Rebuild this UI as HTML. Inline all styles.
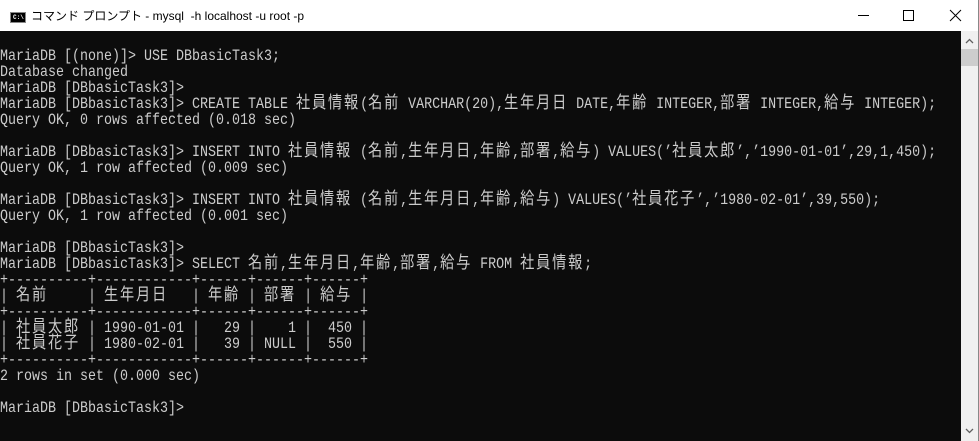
<!DOCTYPE html>
<html><head><meta charset="utf-8"><style>
html,body{margin:0;padding:0;width:979px;height:441px;overflow:hidden;background:#fff}
#title{position:absolute;left:0;top:0;width:979px;height:31px;background:#fff}
#title .t{position:absolute;left:31px;top:7px;font:12px "Liberation Sans","Noto Sans CJK JP",sans-serif;color:#000;white-space:pre}
#icon{position:absolute;left:10px;top:12px;width:14px;height:9px;background:#000;border:1px solid #888}
#icon span{position:absolute;left:2px;top:1px;color:#fff;font:bold 6px "Liberation Mono",monospace}
#con{position:absolute;left:0;top:31px;width:961px;height:410px;background:#0c0c0c;overflow:hidden}
#txt{position:absolute;left:0;top:17px;font:16px "Liberation Mono",monospace;color:#cccccc;transform:scaleX(0.83333);transform-origin:0 0;width:1200px}
#txt div{height:16px;line-height:16px;white-space:pre;overflow:visible}
.j{font-family:"Noto Sans CJK JP",sans-serif;font-size:17px;letter-spacing:2.2px;line-height:10px;vertical-align:top;display:inline-block;height:16px}
#sb{position:absolute;left:961px;top:31px;width:17px;height:410px;background:#f0f0f0}
#thumb{position:absolute;left:961px;top:49px;width:17px;height:17px;background:#cdcdcd}
#edge{position:absolute;left:978px;top:0;width:1px;height:441px;background:#888}
</style></head><body>
<div id="title"><div id="icon"><span>C:\</span></div><div class="t">コマンド プロンプト - mysql  -h localhost -u root -p</div>
<svg style="position:absolute;left:850px;top:5px" width="125" height="22">
<line x1="8" y1="10.5" x2="19" y2="10.5" stroke="#000" stroke-width="1"/>
<rect x="53.5" y="5.5" width="10" height="10" fill="none" stroke="#000"/>
<path d="M100 5 L111 16 M111 5 L100 16" stroke="#000" stroke-width="1"/>
</svg></div>
<div id="con"><div id="txt">
<div>MariaDB [(none)]&gt; USE DBbasicTask3;</div>
<div>Database changed</div>
<div>MariaDB [DBbasicTask3]&gt;</div>
<div>MariaDB [DBbasicTask3]&gt; CREATE TABLE <span class="j">社員情報</span>(<span class="j">名前</span> VARCHAR(20),<span class="j">生年月日</span> DATE,<span class="j">年齢</span> INTEGER,<span class="j">部署</span> INTEGER,<span class="j">給与</span> INTEGER);</div>
<div>Query OK, 0 rows affected (0.018 sec)</div>
<div> </div>
<div>MariaDB [DBbasicTask3]&gt; INSERT INTO <span class="j">社員情報</span> (<span class="j">名前</span>,<span class="j">生年月日</span>,<span class="j">年齢</span>,<span class="j">部署</span>,<span class="j">給与</span>) VALUES(’<span class="j">社員太郎</span>’,’1990-01-01’,29,1,450);</div>
<div>Query OK, 1 row affected (0.009 sec)</div>
<div> </div>
<div>MariaDB [DBbasicTask3]&gt; INSERT INTO <span class="j">社員情報</span> (<span class="j">名前</span>,<span class="j">生年月日</span>,<span class="j">年齢</span>,<span class="j">給与</span>) VALUES(’<span class="j">社員花子</span>’,’1980-02-01’,39,550);</div>
<div>Query OK, 1 row affected (0.001 sec)</div>
<div> </div>
<div>MariaDB [DBbasicTask3]&gt;</div>
<div>MariaDB [DBbasicTask3]&gt; SELECT <span class="j">名前</span>,<span class="j">生年月日</span>,<span class="j">年齢</span>,<span class="j">部署</span>,<span class="j">給与</span> FROM <span class="j">社員情報</span>;</div>
<div>+----------+------------+------+------+------+</div>
<div>| <span class="j">名前</span>     | <span class="j">生年月日</span>   | <span class="j">年齢</span> | <span class="j">部署</span> | <span class="j">給与</span> |</div>
<div>+----------+------------+------+------+------+</div>
<div>| <span class="j">社員太郎</span> | 1990-01-01 |   29 |    1 |  450 |</div>
<div>| <span class="j">社員花子</span> | 1980-02-01 |   39 | NULL |  550 |</div>
<div>+----------+------------+------+------+------+</div>
<div>2 rows in set (0.000 sec)</div>
<div> </div>
<div>MariaDB [DBbasicTask3]&gt;</div>
</div></div>
<div id="sb"></div><div id="thumb"></div>
<svg style="position:absolute;left:961px;top:31px" width="17" height="410">
<path d="M5 12 L8.5 8.5 L12 12" fill="none" stroke="#606060" stroke-width="1.3"/>
<path d="M5 398 L8.5 401.5 L12 398" fill="none" stroke="#606060" stroke-width="1.3"/>
</svg>
<div id="edge"></div>
</body></html>
